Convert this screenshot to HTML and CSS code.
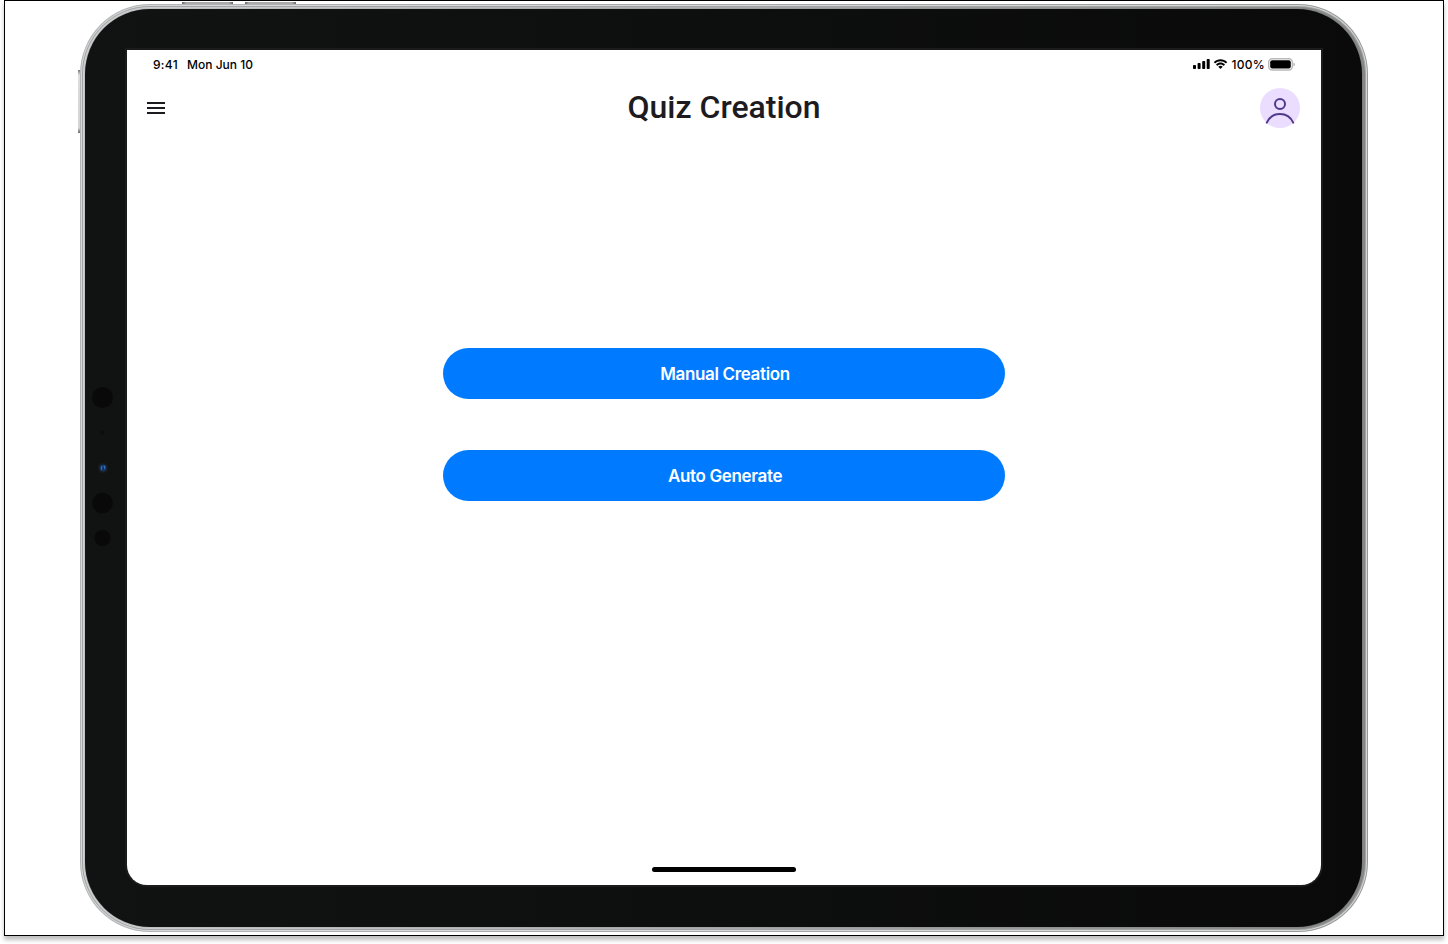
FILE: index.html
```html
<!DOCTYPE html>
<html lang="en">
<head>
<meta charset="utf-8">
<title>Quiz Creation</title>
<link rel="stylesheet" href="styles.css">
</head>
<body>
<div class="canvas">
  <div class="device">
    <span class="key key-up"></span>
    <span class="key key-down"></span>
    <span class="key key-power"></span>
    <div class="rim">
      <div class="bezel">
        <svg class="sensors" width="24" height="170" viewBox="0 0 24 170">
          <circle cx="12.500" cy="17.500" r="10.500" fill="#090909"/>
          <circle cx="12.500" cy="52.500" r="2" fill="#0b0c0c"/>
          <circle cx="13" cy="88" r="5.500" fill="#171819"/>
          <circle cx="13" cy="88" r="3.500" fill="#123a63"/>
          <path d="M11 86.500h1.500v3H11zM13.700 85.800h1.500v3h-1.500z" fill="#2f74c4"/>
          <path d="M12.500 87h1.200v3h-1.200z" fill="#25185c"/>
          <circle cx="12.500" cy="123" r="10.300" fill="#090909"/>
          <circle cx="12.500" cy="158" r="8" fill="#090909"/>
        </svg>
        <main class="screen">
          <div class="status">
            <span class="time">9:41</span>
            <span class="date">Mon Jun 10</span>
            <svg class="signal" width="17" height="10" viewBox="0 0 17 10">
              <rect x="0" y="6" width="3" height="4" rx=".8"/>
              <rect x="4.600" y="4" width="3" height="6" rx=".8"/>
              <rect x="9.200" y="2" width="3" height="8" rx=".8"/>
              <rect x="13.700" y="0" width="3" height="10" rx=".8"/>
            </svg>
            <svg class="wifi" width="15" height="11" viewBox="0 0 15 11">
              <path d="M7.500 2.200c2 0 3.800.8 5.200 2.100.1.100.3.100.4 0l1-1c.1-.1.100-.3 0-.4C10.500-.6 4.600-.6.900 2.900c-.1.100-.1.300 0 .4l1 1c.1.100.3.100.4 0C3.700 3 5.500 2.200 7.500 2.200z"/>
              <path d="M7.500 5.600c1.100 0 2.100.4 2.900 1.100.1.100.3.100.4 0l1-1c.1-.1.100-.3 0-.4-2.500-2.300-6.200-2.300-8.600 0-.1.100-.1.300 0 .4l1 1c.1.100.3.100.4 0 .8-.7 1.800-1.100 2.900-1.100z"/>
              <path d="M9.500 7.900c.1-.1.100-.3 0-.4a3.100 3.100 0 0 0-4 0c-.1.100-.1.300 0 .4l1.800 1.800c.1.100.3.100.4 0z"/>
            </svg>
            <span class="percent">100%</span>
            <svg class="battery" width="27" height="13" viewBox="0 0 27 13">
              <rect x=".7" y=".7" width="23.600" height="11.300" rx="3.500" fill="none" stroke="#b9b9b9" stroke-width="1.400"/>
              <rect x="2.200" y="2.200" width="20.600" height="8.300" rx="2"/>
              <path d="M25.500 4.400c1.100.5 1.300 1.200 1.300 2s-.2 1.500-1.300 2z" fill="#aaa"/>
            </svg>
          </div>
          <header class="topbar">
            <svg class="menu" width="18" height="12" viewBox="0 0 18 12">
              <path d="M0 0h18v2H0zM0 5h18v2H0zM0 10h18v2H0z" fill="#1d1b20"/>
            </svg>
            <h1 class="title">Quiz Creation</h1>
            <svg class="avatar" width="40" height="40" viewBox="0 0 40 40">
              <circle cx="20" cy="20" r="20" fill="#eaddff"/>
              <g fill="none" stroke="#4f378b" stroke-width="2">
                <circle cx="20" cy="16" r="5"/>
                <path d="M6.800 34.600C9.200 29.500 14.200 26 20 26s10.800 3.500 13.200 8.600" stroke-linecap="round"/>
              </g>
            </svg>
          </header>
          <div class="actions">
            <button class="action">Manual Creation</button>
            <button class="action">Auto Generate</button>
          </div>
          <div class="home"></div>
        </main>
      </div>
    </div>
  </div>
</div>
</body>
</html>
```
FILE: styles.css
```css
* { box-sizing: border-box; }

body {
  height: 944px;
  margin: 0;
  background: #fff;
  font-family: Inter, "Liberation Sans", sans-serif;
}

.canvas {
  width: 1440px;
  height: 936px;
  margin: 0 auto;
  padding: 3px 0 0 75px;
  border: 1px solid #000;
  box-shadow: 0 4px 4px rgba(0, 0, 0, .25);
}

.device {
  position: relative;
  width: 1288px;
  height: 928px;
  padding: 1px;
  border-radius: 70px;
  background: linear-gradient(90deg, #b4b6b7, #989898);
}

.key {
  position: absolute;
  background: linear-gradient(90deg, #666, #aaa 8%, #aaa 92%, #666);
}

.key-up { left: 102px; top: -2px; width: 51px; height: 2px; }
.key-down { left: 165px; top: -2px; width: 51px; height: 2px; }

.key-power {
  left: -2px;
  top: 66px;
  width: 2px;
  height: 63px;
  background: linear-gradient(#777, #ddd 8%, #d4d4d4 92%, #666);
}

.rim {
  height: 100%;
  padding: 4px 5px 4px 4px;
  border-radius: 69px;
  background: linear-gradient(90deg, #cfd1d2, #858686);
  box-shadow: inset 0 0 0 1px #d6d7d8, inset 0 0 0 2px #a2a3a4;
}

.bezel {
  position: relative;
  height: 100%;
  padding: 41px 41px 42px 42px;
  border-radius: 65px;
  background: linear-gradient(90deg, #111212, #0a0a0a);
  box-shadow: 0 0 1px #555;
}

.sensors {
  position: absolute;
  left: 5px;
  top: 371px;
}

.screen {
  display: flex;
  flex-direction: column;
  align-items: center;
  height: 100%;
  border-radius: 0 0 20px 20px;
  background: #fff;
  box-shadow: 0 0 0 2px #1b1b1c;
}

.status {
  display: flex;
  align-items: center;
  width: 100%;
  height: 28px;
  padding: 0 26px;
  font-size: 12px;
  font-weight: 500;
  color: #000;
}

.time { width: 34px; letter-spacing: .3px; }
.date { flex: 1; letter-spacing: .02px; }
.wifi { margin: 0 4px 0 3px; }
.percent { width: 36.5px; letter-spacing: .3px; }

.topbar {
  display: flex;
  align-items: center;
  justify-content: space-between;
  width: 100%;
  height: 60px;
  padding: 0 21px 0 20px;
}

.menu { margin-right: 22px; }

.title {
  margin: 0 0 2px 1px;
  font: 500 32px/40px Roboto, sans-serif;
  color: #1d1b20;
}

.actions {
  display: flex;
  flex-direction: column;
  gap: 51px;
  width: 562px;
  margin-top: 210px;
}

.action {
  height: 51px;
  padding: 0 0 0 2px;
  border: 0;
  border-radius: 25.5px;
  background: #007aff;
  color: #fff;
  font: 600 17px/22px Inter, sans-serif;
  letter-spacing: -.35px;
}

.home {
  width: 144px;
  height: 5px;
  margin: auto 0 13px;
  border-radius: 3px;
  background: #000;
}
```
